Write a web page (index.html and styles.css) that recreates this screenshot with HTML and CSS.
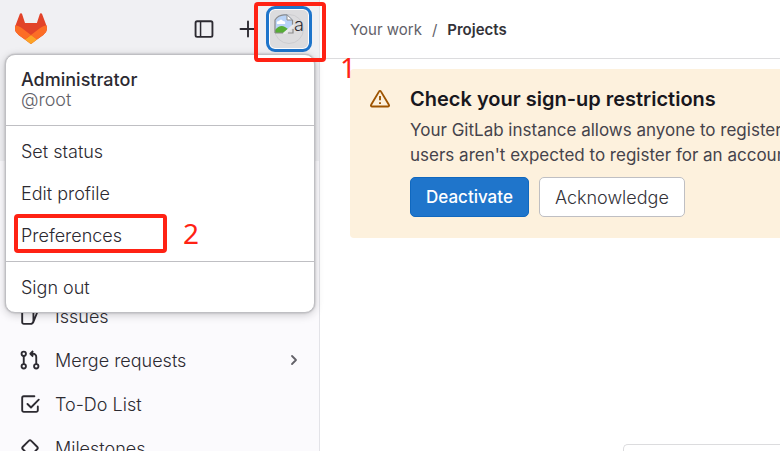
FILE: index.html
```html
<!DOCTYPE html>
<html lang="en">
<head>
<meta charset="utf-8">
<meta name="viewport" content="width=device-width, initial-scale=1">
<title>Projects</title>
<link rel="stylesheet" href="styles.css">
</head>
<body>
<div class="app">
  <aside class="sidebar">
    <div class="userbar">
      <a class="logo" href="#" aria-label="Homepage">
        <svg viewBox="0 0 25 24" width="32" height="31" aria-hidden="true">
          <path fill="#E24329" d="m24.507 9.5-.034-.09L21.082.562a.896.896 0 0 0-1.694.091l-2.29 7.01H7.825L5.535.653a.898.898 0 0 0-1.694-.09L.451 9.411.416 9.5a6.297 6.297 0 0 0 2.09 7.278l.012.01.03.022 5.16 3.867 2.56 1.935 1.554 1.176a1.051 1.051 0 0 0 1.268 0l1.555-1.176 2.56-1.935 5.197-3.89.014-.01A6.297 6.297 0 0 0 24.507 9.5Z"/>
          <path fill="#FC6D26" d="m24.507 9.5-.034-.09a11.44 11.44 0 0 0-4.56 2.051l-7.447 5.632 4.742 3.584 5.197-3.89.014-.01A6.297 6.297 0 0 0 24.507 9.5Z"/>
          <path fill="#FCA326" d="m7.707 20.677 2.56 1.935 1.555 1.176a1.051 1.051 0 0 0 1.268 0l1.555-1.176 2.56-1.935-4.743-3.584-4.755 3.584Z"/>
          <path fill="#FC6D26" d="M5.01 11.461a11.43 11.43 0 0 0-4.56-2.05L.416 9.5a6.297 6.297 0 0 0 2.09 7.278l.012.01.03.022 5.16 3.867 4.745-3.584-7.444-5.632Z"/>
        </svg>
      </a>
      <button class="icon-btn" type="button" aria-label="Hide sidebar">
        <svg viewBox="0 0 16 16" width="20" height="20" fill="none" stroke="currentColor" stroke-width="1.5" aria-hidden="true"><rect x="1.25" y="1.75" width="13.5" height="12.5" rx="1.25"/><path d="M5.25 2v12" stroke-width="1.2"/></svg>
      </button>
      <button class="icon-btn" type="button" aria-label="Create new">
        <svg viewBox="0 0 16 16" width="20" height="20" fill="none" stroke="currentColor" stroke-width="1.5" stroke-linecap="round" aria-hidden="true"><path d="M8 2v12M2 8h12"/></svg>
      </button>
      <div class="account">
        <button class="avatar-btn" type="button" aria-label="Administrator user's menu">
          <span class="avatar">
            <svg viewBox="0 0 20 20" width="20" height="20" aria-hidden="true">
              <path fill="#b9d3f6" d="M1 19V6Q4 1 10 0h3l6 6v6L9 19z"/>
              <path fill="#fff" d="M3 10q-1-3 2-3 2-3 4 0 3 0 2 3z"/>
              <path fill="#56ad35" d="M1 19v-3q5-6 10-3l3 2-5 4z"/>
              <path fill="#fff" stroke="#8b8b8b" d="M13 .8V6h5.500z"/>
              <path fill="none" stroke="#8b8b8b" stroke-width="1.200" d="M1 19V6Q4 1 10 .8h3M18.500 6v6M1 19h8M14 19h5v-4"/>
              <path stroke="#e8e8ea" stroke-width="2.500" d="M10 20l10-9"/>
            </svg>
            <span>a</span>
          </span>
        </button>
        <span class="mark mark-avatar"></span>
        <span class="mark-number number-one">1</span>
        <div class="menu">
          <div class="profile"><strong>Administrator</strong><span>@root</span></div>
          <ul>
            <li><a href="#">Set status</a></li>
            <li><a href="#">Edit profile</a></li>
            <li class="marked"><a href="#">Preferences</a><span class="mark mark-item"></span><span class="mark-number number-two">2</span></li>
          </ul>
          <ul class="signout"><li><a href="#">Sign out</a></li></ul>
        </div>
      </div>
    </div>
    <nav class="nav" aria-label="Your work">
      <a href="#">
        <svg viewBox="0 0 16 16" width="20" height="20" fill="none" stroke="currentColor" stroke-width="1.5" stroke-linejoin="round" aria-hidden="true"><path d="M9.500 14.250H3A1.250 1.250 0 0 1 1.750 13V3A1.250 1.250 0 0 1 3 1.750h6.500A1.250 1.250 0 0 1 10.750 3v9.500zM11 4l2.800 1-3.500 8.800"/></svg>
        <span>Issues</span>
      </a>
      <a href="#">
        <svg viewBox="0 0 16 16" width="20" height="20" fill="none" stroke="currentColor" stroke-width="1.5" stroke-linejoin="round" aria-hidden="true"><circle cx="3" cy="3" r="1.750"/><circle cx="3" cy="13" r="1.750"/><circle cx="13" cy="13" r="1.750"/><path d="M3 4.750v6.500M13 11.250V5.500A2.500 2.500 0 0 0 10.500 3H8.500M10.500.8 8.300 3l2.200 2.200"/></svg>
        <span>Merge requests</span>
        <svg class="chevron" viewBox="0 0 16 16" width="16" height="16" fill="none" stroke="currentColor" stroke-width="1.800" stroke-linecap="round" stroke-linejoin="round" aria-hidden="true"><path d="m6 4 4 4-4 4"/></svg>
      </a>
      <a href="#">
        <svg viewBox="0 0 16 16" width="20" height="20" fill="none" stroke="currentColor" stroke-width="1.5" stroke-linecap="round" stroke-linejoin="round" aria-hidden="true"><path d="M11.500 1.750H3A1.250 1.250 0 0 0 1.750 3v10A1.250 1.250 0 0 0 3 14.250h10A1.250 1.250 0 0 0 14.250 13v-3M6 8l2.800 2.800L15 4.500"/></svg>
        <span>To-Do List</span>
      </a>
      <a href="#">
        <svg viewBox="0 0 16 16" width="20" height="20" fill="none" stroke="currentColor" stroke-width="1.5" stroke-linejoin="round" aria-hidden="true"><path d="M7.200 2.100a1.100 1.100 0 0 1 1.600 0l5.100 5.100a1.100 1.100 0 0 1 0 1.600l-5.100 5.100a1.100 1.100 0 0 1-1.600 0L2.100 8.800a1.100 1.100 0 0 1 0-1.600z"/></svg>
        <span>Milestones</span>
      </a>
    </nav>
  </aside>
  <div class="page">
    <header class="topbar">
      <nav class="crumbs" aria-label="Breadcrumb"><a href="#">Your work</a><span>/</span><a class="current" href="#">Projects</a></nav>
    </header>
    <main>
      <section class="alert">
        <svg viewBox="0 0 16 16" width="20" height="20" fill="none" stroke="currentColor" stroke-width="1.500" stroke-linejoin="round" aria-hidden="true"><path d="M7.300 1.900a.8.8 0 0 1 1.400 0l6.400 10.700a.9.900 0 0 1-.8 1.400H1.700a.9.900 0 0 1-.8-1.400zM8 5.500v3.500M8 10.500V12"/></svg>
        <div class="alert-body">
          <h2>Check your sign-up restrictions</h2>
          <p>Your GitLab instance allows anyone to register<br>users aren't expected to register for an account.</p>
          <div class="actions">
            <button class="btn primary" type="button">Deactivate</button>
            <button class="btn" type="button">Acknowledge</button>
          </div>
        </div>
      </section>
      <div class="panel"></div>
    </main>
  </div>
</div>
</body>
</html>
```

FILE: styles.css
```css
* { box-sizing: border-box; }

body {
  margin: 0;
  background: #fff;
  color: #2c2a31;
  font: 300 18px/25px Inter, "Noto Sans", sans-serif;
}

a { color: inherit; text-decoration: none; }
button { font: inherit; color: inherit; cursor: pointer; }
svg { display: block; flex: none; }
ul { margin: 0; padding: 4px 0; list-style: none; }

.app {
  display: grid;
  grid-template-columns: 320px minmax(0, 1fr);
  height: 100vh;
  overflow: hidden;
}

.sidebar {
  background: #fbfafd;
  border-right: 1px solid #e3e3e8;
}

.userbar {
  display: flex;
  align-items: flex-start;
  height: 161px;
  padding: 6px 7px 0 15px;
  background: #f0f0f3;
}

.logo { margin: 7px auto 0 0; }

.icon-btn {
  padding: 13px 12px;
  border: 0;
  background: none;
}

.account { position: relative; }
.icon-btn + .account { margin-left: -4px; }

.avatar-btn {
  display: block;
  width: 46px;
  height: 46px;
  padding: 5px;
  border: 3px solid #1f75cb;
  border-radius: 9px;
  background: #dcdcde;
  box-shadow: inset 0 0 0 1px #fff;
}

.avatar {
  display: flex;
  width: 30px;
  height: 30px;
  border: 1px solid #cdcdd0;
  border-radius: 50%;
}

.avatar svg { margin: -1px 0 0 -1px; }
.avatar span { line-height: 20px; }

.mark {
  position: absolute;
  border: 4px solid #ff2214;
  border-radius: 4px;
  pointer-events: none;
}

.mark-avatar { inset: -4px -14px -10px -12px; z-index: 3; }
.mark-item { inset: 0 147px 3px 8px; }

.mark-number {
  position: absolute;
  color: #ff2214;
  font: 28px/28px "Noto Sans", sans-serif;
}

.number-one { top: 47px; left: 74px; z-index: 3; }
.number-two { top: 5px; left: 177px; }

.menu {
  position: absolute;
  top: 48px;
  right: -3px;
  z-index: 2;
  width: 310px;
  border: 1px solid #bfbfc3;
  border-radius: 10px;
  background: #fff;
  box-shadow: 0 2px 8px #1f1e2438, 0 0 2px #1f1e2450;
}

.profile {
  display: flex;
  flex-direction: column;
  padding: 15px;
  line-height: 20px;
}

.profile strong { font-weight: 500; }
.profile span { color: #626168; }
.menu ul { border-top: 1px solid #bfbfc3; }
.menu ul:not(.signout) { padding-bottom: 5px; }
.menu li { position: relative; }
.menu li a { display: block; padding: 9px 15px 8px; }

.nav { padding-top: 133px; }

.nav a {
  display: flex;
  align-items: center;
  gap: 15px;
  height: 44px;
  padding: 0 17px 0 20px;
}

.chevron { margin-left: auto; color: #626168; }

.topbar {
  display: flex;
  align-items: center;
  height: 59px;
  padding: 0 30px;
  border-bottom: 1px solid #dcdcde;
}

.crumbs {
  display: flex;
  gap: 10px;
  font-size: 15px;
  font-weight: 400;
  color: #626168;
}

.crumbs .current { color: #333238; font-weight: 600; }

main { padding: 10px 0 0 30px; }

.alert {
  display: flex;
  gap: 20px;
  padding: 20px 20px 21px;
  border-radius: 4px 0 0 4px;
  background: #fdf1dd;
  color: #9e5400;
}

.alert-body { min-width: 0; color: #333238; }

h2 {
  margin: 0 0 9px;
  color: #18171d;
  font-size: 20px;
  line-height: 20px;
  font-weight: 600;
}

p {
  margin: 0 0 9px;
  color: #45434b;
  font-size: 17px;
  font-weight: 400;
  white-space: nowrap;
}

.actions { display: flex; gap: 10px; }

.btn {
  height: 40px;
  padding: 0 15px;
  border: 1px solid #bfbfc3;
  border-radius: 5px;
  background: #fff;
}

.btn.primary {
  border-color: #1068bf;
  background: #1f75cb;
  color: #fff;
  font-size: 17px;
  font-weight: 500;
}

.panel {
  height: 60px;
  margin: 206px 0 0 273px;
  border: 1px solid #dcdcde;
  border-width: 1px 0 0 1px;
  border-radius: 5px 0 0;
}
```
